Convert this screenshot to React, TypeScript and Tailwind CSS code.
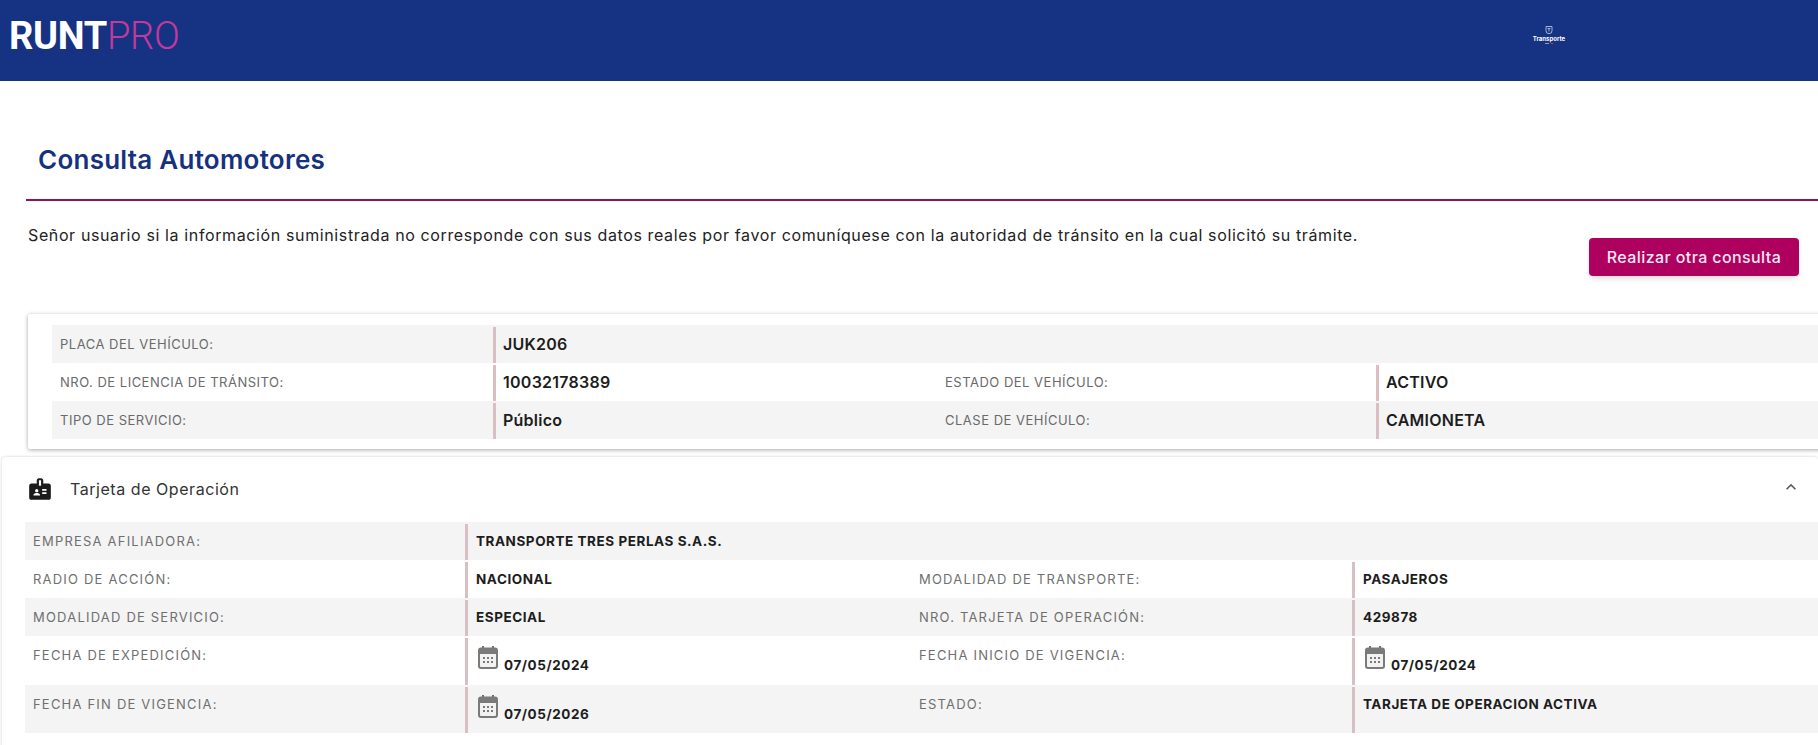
import { MdBadge, MdExpandLess } from 'react-icons/md';

const font = { fontFamily: 'Inter, "Open Sans", sans-serif' };

interface Cell {
  label: string;
  value: string;
  date?: boolean;
}

const vehicleRows: Cell[][] = [
  [{ label: 'PLACA DEL VEHÍCULO:', value: 'JUK206' }],
  [
    { label: 'NRO. DE LICENCIA DE TRÁNSITO:', value: '10032178389' },
    { label: 'ESTADO DEL VEHÍCULO:', value: 'ACTIVO' },
  ],
  [
    { label: 'TIPO DE SERVICIO:', value: 'Público' },
    { label: 'CLASE DE VEHÍCULO:', value: 'CAMIONETA' },
  ],
];

const cardRows: Cell[][] = [
  [{ label: 'EMPRESA AFILIADORA:', value: 'TRANSPORTE TRES PERLAS S.A.S.' }],
  [
    { label: 'RADIO DE ACCIÓN:', value: 'NACIONAL' },
    { label: 'MODALIDAD DE TRANSPORTE:', value: 'PASAJEROS' },
  ],
  [
    { label: 'MODALIDAD DE SERVICIO:', value: 'ESPECIAL' },
    { label: 'NRO. TARJETA DE OPERACIÓN:', value: '429878' },
  ],
  [
    { label: 'FECHA DE EXPEDICIÓN:', value: '07/05/2024', date: true },
    { label: 'FECHA INICIO DE VIGENCIA:', value: '07/05/2024', date: true },
  ],
  [
    { label: 'FECHA FIN DE VIGENCIA:', value: '07/05/2026', date: true },
    { label: 'ESTADO:', value: 'TARJETA DE OPERACION ACTIVA' },
  ],
];

function CalendarIcon() {
  return (
    <svg width="20" height="23" viewBox="0 0 20 23" className="shrink-0">
      <path d="M4 0h2v3H4zM14 0h2v3h-2z" fill="#6f6f6f" />
      <rect x="1" y="2.5" width="18" height="19.5" rx="2" fill="#f2f2f2" stroke="#7a7a7a" strokeWidth="2" />
      <path d="M1 4a2 2 0 0 1 2-2h14a2 2 0 0 1 2 2v4H1z" fill="#7a7a7a" />
      <path
        d="M5 11h2v2H5zM9 11h2v2H9zM13 11h2v2h-2zM5 15h2v2H5zM9 15h2v2H9zM13 15h2v2h-2z"
        fill="#7a7a7a"
      />
    </svg>
  );
}

function TransporteLogo() {
  return (
    <div className="flex w-[32px] flex-col items-center text-white">
      <svg width="10" height="10" viewBox="0 0 10 10" fill="none" stroke="#c9d3ec" strokeWidth="0.8">
        <path d="M2 1.5h6v4.2a3 3 0 0 1-6 0z" />
        <path d="M3.6 3.5h2.8M5 3.5v3" />
      </svg>
      <span className="text-[6px] leading-[7px] font-bold">Transporte</span>
      <div className="mt-[1px] flex gap-[2px]">
        <div className="h-[1px] w-[4px] bg-gray-400" />
        <div className="h-[1px] w-[2px] bg-red-500" />
      </div>
    </div>
  );
}

function VehicleRow({ row, shaded }: { row: Cell[]; shaded: boolean }) {
  return (
    <div className={`grid h-[38px] grid-cols-[441px_444px_439px_1fr] ${shaded ? 'bg-[#f4f4f4]' : ''}`}>
      {row.map((cell) => (
        <div key={cell.label} className="contents">
          <div className="mt-[1px] flex items-center pl-2 text-[13px] tracking-[0.5px] text-[#6a6a6a]">
            {cell.label}
          </div>
          <div className="mt-[2px] flex items-center border-l-[3px] border-[#d9bfc4] pb-[3px] pl-[7px] text-[16px] font-semibold tracking-[0.25px] text-[#1d1d1d]">
            {cell.value}
          </div>
        </div>
      ))}
    </div>
  );
}

function OperationRow({ row, shaded }: { row: Cell[]; shaded: boolean }) {
  const tall = row.some((cell) => cell.date);
  return (
    <div
      className={`grid grid-cols-[440px_446px_441px_445px] ${tall ? 'h-[48.5px]' : 'h-[38px]'} ${shaded ? 'bg-[#f4f4f4]' : ''}`}
    >
      {row.map((cell) => (
        <div key={cell.label} className="contents">
          <div
            className={`flex pl-2 text-[13px] tracking-[1.2px] text-[#6f6f6f] ${tall ? 'pt-[10px]' : 'mt-[1px] items-center'}`}
          >
            {cell.label}
          </div>
          <div
            className={`mt-[2px] flex border-l-[3px] border-[#d9bfc4] pl-[8px] text-[13.5px] font-bold tracking-[0.55px] text-[#1d1d1d] ${tall ? '' : 'items-center pb-[1px]'}`}
          >
            {cell.date ? (
              <div className="flex items-start pt-[8px] pl-[2px]">
                <CalendarIcon />
                <span className="mt-[9px] ml-[6px] leading-[20px]">{cell.value}</span>
              </div>
            ) : (
              <span className={tall ? 'pt-[7px]' : ''}>{cell.value}</span>
            )}
          </div>
        </div>
      ))}
    </div>
  );
}

export default function App() {
  return (
    <div className="h-screen overflow-hidden bg-white" style={font}>
      <header className="flex h-[81px] items-start justify-between bg-[#163282]">
        <div
          className="mt-[14px] ml-[9px] text-[38px] leading-[44px] tracking-[-0.3px]"
          style={{ fontFamily: 'Roboto, sans-serif' }}
        >
          <span className="font-bold text-white">RUNT</span>
          <span className="font-light text-[#c4399b]">PRO</span>
        </div>
        <div className="mt-[25px] mr-[253px]">
          <TransporteLogo />
        </div>
      </header>

      <div className="ml-[26px] flex h-[120px] items-end border-b-2 border-[#8c1559] pb-[22px] pl-[12px]">
        <h1 className="text-[26px] leading-[34px] font-semibold tracking-[0.25px] text-[#16317d]">
          Consulta Automotores
        </h1>
      </div>

      <div className="flex h-[113px] justify-between pr-[19px] pl-[28px]">
        <p className="pt-[23px] text-[16px] leading-[22px] tracking-[0.62px] text-[#222222]">
          Señor usuario si la información suministrada no corresponde con sus datos reales por favor comuníquese con la
          autoridad de tránsito en la cual solicitó su trámite.
        </p>
        <button className="mt-[37px] h-[38px] w-[210px] rounded bg-[#ae005e] text-[16px] font-medium tracking-[0.4px] text-[#fbe6f1] shadow-md">
          Realizar otra consulta
        </button>
      </div>

      <section className="ml-[28px] w-[1850px] rounded-[2px] bg-white pt-[11px] pb-[10px] pl-[24px] shadow-[0_1px_4px_rgba(0,0,0,0.35)]">
        {vehicleRows.map((row, i) => (
          <VehicleRow key={row[0].label} row={row} shaded={i % 2 === 0} />
        ))}
      </section>

      <section className="mt-[8px] ml-[2px] h-[400px] w-[1816px] rounded-t bg-white shadow-[0_0_3px_rgba(0,0,0,0.2)]">
        <div className="flex h-[65px] items-center justify-between pr-[17px] pb-[2px] pl-[25px]">
          <div className="flex items-center gap-[17px]">
            <MdBadge className="text-[#1c1c1c]" size={26} />
            <span className="text-[16px] tracking-[0.55px] text-[#333333]">Tarjeta de Operación</span>
          </div>
          <MdExpandLess className="mb-[3px] text-[#5a5a5a]" size={20} />
        </div>
        <div className="ml-[23px]">
          {cardRows.map((row, i) => (
            <OperationRow key={row[0].label} row={row} shaded={i % 2 === 0} />
          ))}
        </div>
      </section>
    </div>
  );
}
